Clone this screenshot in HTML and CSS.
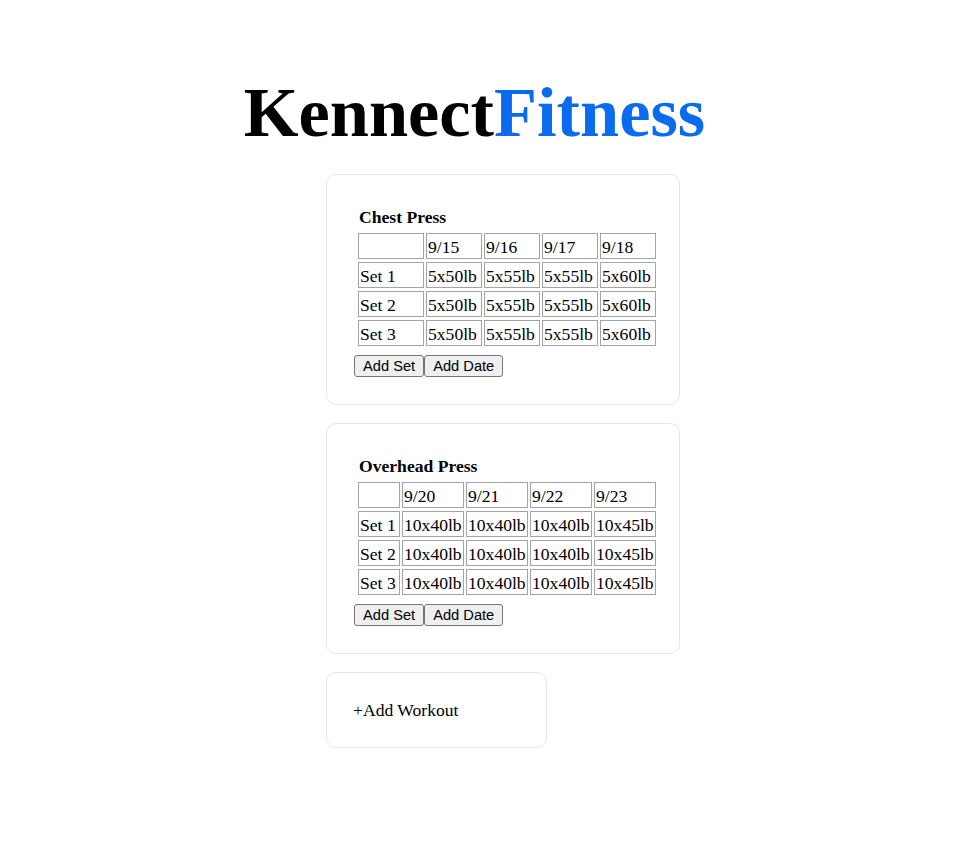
FILE: index.html
```html
<!DOCTYPE html>
<html>
<head>
<meta charset="utf-8">
<title>KennectFitness</title>
<link rel="stylesheet" href="styles.css">
</head>
<body>
<header class="brand"><span class="brand-dark">Kennect</span><span class="brand-blue">Fitness</span></header>
<main class="column">
  <section class="card">
    <h3 class="workout-title">Chest Press</h3>
    <table class="log log-chest">
      <tr><td class="c-first"></td><td>9/15</td><td>9/16</td><td>9/17</td><td>9/18</td></tr>
      <tr><td>Set 1</td><td>5x50lb</td><td>5x55lb</td><td>5x55lb</td><td>5x60lb</td></tr>
      <tr><td>Set 2</td><td>5x50lb</td><td>5x55lb</td><td>5x55lb</td><td>5x60lb</td></tr>
      <tr><td>Set 3</td><td>5x50lb</td><td>5x55lb</td><td>5x55lb</td><td>5x60lb</td></tr>
    </table>
    <div class="actions"><button class="btn">Add Set</button><button class="btn">Add Date</button></div>
  </section>
  <section class="card">
    <h3 class="workout-title">Overhead Press</h3>
    <table class="log log-overhead">
      <tr><td class="c-first"></td><td>9/20</td><td>9/21</td><td>9/22</td><td>9/23</td></tr>
      <tr><td>Set 1</td><td>10x40lb</td><td>10x40lb</td><td>10x40lb</td><td>10x45lb</td></tr>
      <tr><td>Set 2</td><td>10x40lb</td><td>10x40lb</td><td>10x40lb</td><td>10x45lb</td></tr>
      <tr><td>Set 3</td><td>10x40lb</td><td>10x40lb</td><td>10x40lb</td><td>10x45lb</td></tr>
    </table>
    <div class="actions"><button class="btn">Add Set</button><button class="btn">Add Date</button></div>
  </section>
  <section class="card card-add">+Add Workout</section>
</main>
</body>
</html>
```
FILE: styles.css
```css
html, body {
  margin: 0;
  padding: 0;
  background: #ffffff;
}
body {
  font-family: "Liberation Serif", "Times New Roman", serif;
  font-size: 17.6px;
  color: #000;
}
.brand {
  margin: 72px 0 0 0;
  padding-right: 28px;
  text-align: center;
  font-size: 70.4px;
  font-weight: bold;
  line-height: 80px;
  height: 80px;
}
.brand-blue {
  color: #0a6bef;
}
.column {
  margin: 22px 0 40px 326px;
  display: flex;
  flex-direction: column;
  align-items: flex-start;
  gap: 18px;
}
.card {
  box-sizing: border-box;
  width: 354px;
  border: 1px solid #e6e6e6;
  border-radius: 10px;
  padding: 32px 21px 27px 27px;
}
.workout-title {
  margin: 0 0 0 5px;
  font-size: 17.6px;
  font-weight: bold;
  line-height: 20px;
}
.log {
  margin: 3px 0 0 2px;
  width: 302px;
  table-layout: fixed;
  border-collapse: separate;
  border-spacing: 2px 3px;
}
.log td {
  box-sizing: border-box;
  height: 26px;
  padding: 3px 1px 1px 1px;
  border: 1px solid #a3a3a3;
  line-height: 20px;
  font-size: 17.6px;
  vertical-align: top;
  white-space: nowrap;
  overflow: hidden;
}
.log-chest td { width: 56px; }
.log-chest td.c-first { width: 66px; }
.log-overhead td { width: 62px; }
.log-overhead td.c-first { width: 42px; }
.actions {
  display: flex;
  margin-top: 6px;
}
.btn {
  box-sizing: border-box;
  height: 22px;
  padding: 0 8px;
  margin: 0;
  font-family: "Liberation Sans", Arial, sans-serif;
  font-size: 14.67px;
  color: #000;
  background: #efefef;
  border: 1px solid #767676;
  border-radius: 3px;
}
.card-add {
  width: 221px;
  padding: 27px 20px 27px 26px;
  line-height: 20px;
}
```
